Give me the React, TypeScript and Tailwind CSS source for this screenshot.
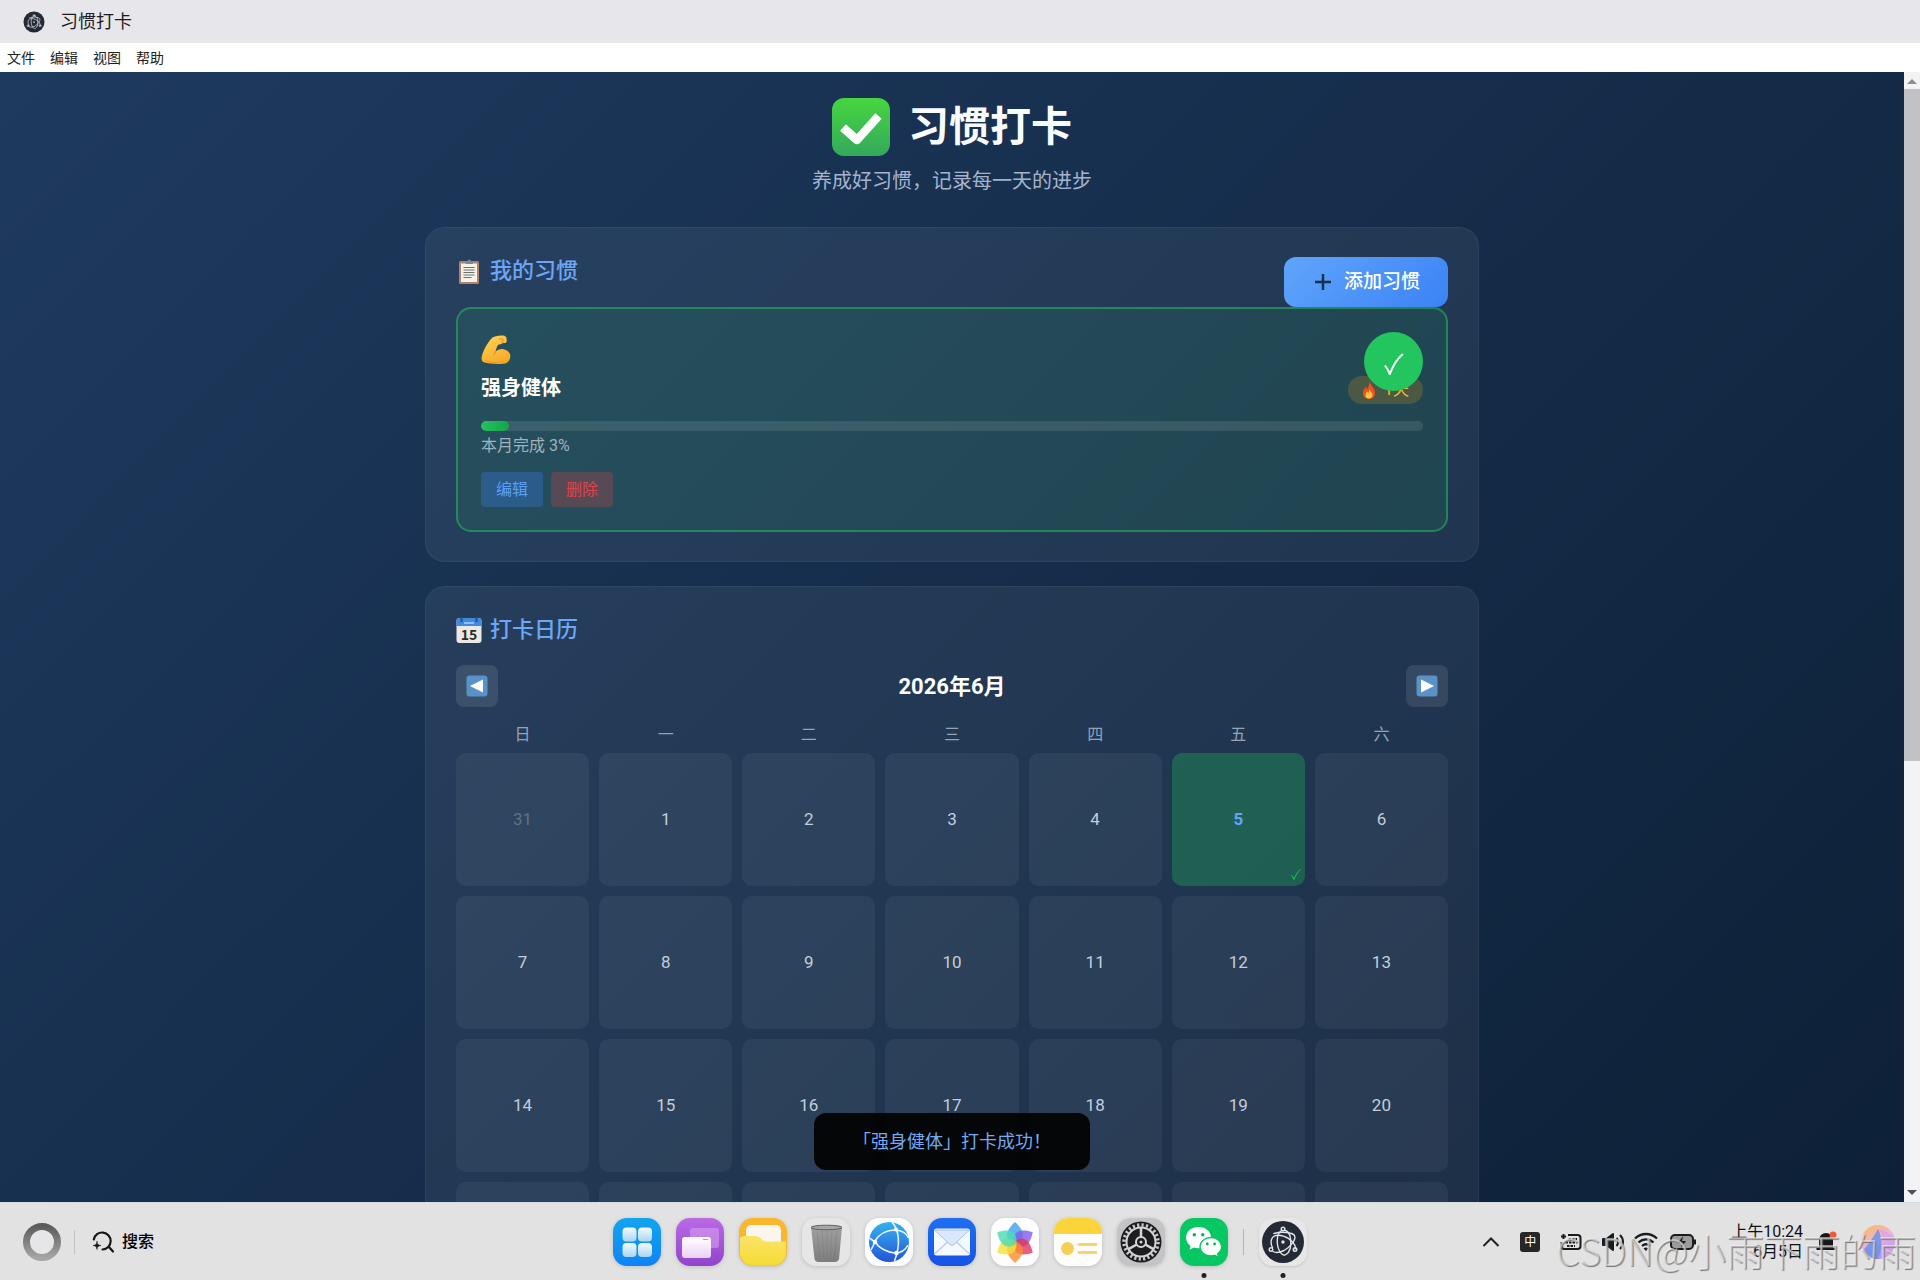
import { useState } from 'react'

const WEEKDAYS = ['日', '一', '二', '三', '四', '五', '六']
const DAYS = [31, ...Array.from({ length: 30 }, (_, i) => i + 1), 1, 2, 3, 4]

function ElectronLogo({ className }: { className?: string }) {
  return (
    <svg viewBox="0 0 48 48" className={className} aria-hidden="true">
      <circle cx="24" cy="24" r="21" fill="#242936" />
      <g fill="none" stroke="#dfe6ea" strokeWidth="1.4" strokeLinecap="round">
        <path d="M13.5 29.5C11 25 12 20.5 14.5 18.500C20 15.500 29 18.500 34 24.500C36 27 37 29.500 36 31" />
        <path d="M22.500 12.500C17 16 17 28 21.500 34.500C23 37 25.500 37.500 27 36.500C31 34 32.500 28 31.500 20.500C31 16.500 29 13 25.500 12" />
        <path d="M15 15.500C22 13.500 33 14 35.500 17.500C37.500 21.500 31.500 29 25 32.500C21 34.500 16.500 35 14 33.500" />
        <circle cx="24" cy="11" r="1.8" />
        <circle cx="12" cy="31.500" r="1.8" />
        <circle cx="36" cy="31.500" r="1.8" />
      </g>
      <circle cx="24" cy="24" r="1.7" fill="#dfe6ea" />
    </svg>
  )
}

function CheckBadge() {
  return (
    <svg viewBox="0 0 58 58" className="size-[58px]" aria-hidden="true">
      <defs>
        <linearGradient id="badge" x1="0" y1="0" x2="0" y2="1">
          <stop offset="0" stopColor="#47d63f" />
          <stop offset="1" stopColor="#33a85c" />
        </linearGradient>
      </defs>
      <rect width="58" height="58" rx="12" fill="url(#badge)" />
      <path d="M11 29.500L25 42L46.500 18" fill="none" stroke="#fff" strokeWidth="8.500" strokeLinejoin="round" />
    </svg>
  )
}

function Clipboard() {
  return (
    <svg viewBox="0 0 26 26" className="size-[26px]" aria-hidden="true">
      <rect x="3" y="3" width="20" height="23" rx="1.500" fill="#b3826a" />
      <rect x="5" y="5.500" width="16" height="18.500" fill="#f5f2ea" />
      <path d="M10 5.500V3.500H11.500A1.800 1.800 0 0 1 15 3.500H16.500V5.500Z" fill="#7d8798" stroke="#7d8798" />
      <path d="M7.500 9.500h11M7.500 12h11M7.500 14.500h11M7.500 17h11M7.500 19.500h8" stroke="#6c716f" strokeWidth="1" />
    </svg>
  )
}

function CalendarEmoji() {
  return (
    <svg viewBox="0 0 26 26" className="size-[26px]" aria-hidden="true">
      <rect x="0.500" y="1" width="25" height="25" rx="3" fill="#ece9e4" />
      <path d="M0.500 9V4a3 3 0 0 1 3-3h19a3 3 0 0 1 3 3v5Z" fill="#3f8ae0" />
      <path d="M5.500 0v5M20.500 0v5" stroke="#1d4f94" strokeWidth="2" />
      <path d="M8 6h10" stroke="#8fc0f5" strokeWidth="2" />
      <text x="13" y="22.500" textAnchor="middle" fontSize="14" fontWeight="600" fontFamily="'Noto Sans CJK SC', sans-serif" fill="#2b2b2b">15</text>
    </svg>
  )
}

function Bicep() {
  return (
    <svg viewBox="0 0 30 30" className="size-[30px]" aria-hidden="true">
      <defs>
        <linearGradient id="arm" x1="0" y1="0" x2="0.4" y2="1">
          <stop offset="0" stopColor="#ffd257" />
          <stop offset="1" stopColor="#f9ac2b" />
        </linearGradient>
      </defs>
      <path
        d="M14 1.500C17 0.500 21 0.200 23.500 0.700C25.500 1.500 26 4 25.500 7C25 8.300 23 8.200 22 7.700C20.500 9.500 18.500 9.500 17 9.700C16 12 15 14 14.500 16.800C17 14.300 20 13.700 22.500 14.300C26.500 15 29 17.500 29.300 20.500C29.500 24 28 27 25 28.200C20 29.700 8 29 3 27.300C0.800 26.500 0.200 24.500 0.700 22C2 15.500 6 9 9.500 4.500C10.800 2.800 12 2 14 1.500Z"
        fill="url(#arm)"
      />
      <path d="M13 20C14 18 14.500 17.200 14.500 16.800M18.500 4C20 3.500 22 3.800 22.500 5.200M22 7.700C21 7.300 20.500 6.500 21 5.800" fill="none" stroke="#d98a1c" strokeWidth="1" strokeLinecap="round" />
      <path d="M4 25.500C11 28 21 28 27 25" fill="none" stroke="#e08f1f" strokeWidth="1" opacity="0.6" />
    </svg>
  )
}

function Flame() {
  return (
    <svg viewBox="0 0 14 18" className="h-[18px] w-[14px]" aria-hidden="true">
      <path d="M7.500 0C8 4 13 7 13 12C13 15.500 10.500 18 7 18C3.500 18 1 15.500 1 12C1 9 3 8 3.500 5.500C4.500 6.500 5 7.500 5 8.500C6.500 6 7.500 3.500 7.500 0Z" fill="#f4501e" />
      <path d="M7.300 8C7.800 10.500 10.500 11.500 10.500 14C10.500 16.500 9 17.500 7 17.500C5 17.500 3.500 16.300 3.500 14.200C3.500 12.500 4.500 11.500 5 10.500C6 11 6.200 11.500 6.200 12C7 11 7.400 9.500 7.300 8Z" fill="#ffc83d" />
    </svg>
  )
}

function Tick({ className }: { className?: string }) {
  return (
    <svg viewBox="0 0 20 22" className={className} aria-hidden="true">
      <path d="M1 12.500C3 15 4.500 18 5.800 21C9 12.500 13 6 18.800 1" fill="none" stroke="currentColor" strokeWidth="2" />
    </svg>
  )
}

function Arrow({ d }: { d: string }) {
  return (
    <svg viewBox="0 0 22 22" className="size-[22px]" aria-hidden="true">
      <rect x="0.500" y="0.500" width="21" height="21" rx="3" fill="#5a91c6" />
      <path d={d} fill="#fff" />
    </svg>
  )
}

const dockIcons = [
  {
    name: '启动器',
    art: (
      <>
        <rect width="48" height="48" rx="14" fill="url(#dk-blue)" />
        {[[9.5, 9.5], [25, 9.5], [9.5, 25], [25, 25]].map(([x, y]) => (
          <rect key={`${x}-${y}`} x={x} y={y} width="14" height="14" rx="4" fill="url(#dk-glass)" />
        ))}
      </>
    ),
  },
  {
    name: '多任务',
    art: (
      <>
        <rect width="48" height="48" rx="14" fill="url(#dk-purple)" />
        <rect x="14" y="10" width="29" height="20" rx="3" fill="#d9a4f0" opacity="0.55" />
        <rect x="6" y="19" width="29" height="21" rx="3" fill="url(#dk-lilac)" />
        <path d="M27 21.500h5" stroke="#c78be0" />
      </>
    ),
  },
  {
    name: '文件管理',
    art: (
      <>
        <rect width="48" height="48" rx="14" fill="#fbb72c" />
        <rect x="7" y="7" width="35" height="24" rx="5" fill="#faf6ee" />
        <path d="M1 21C1 18 4 18 7 18H17C21 18 22 22 26 23.500C29 24.500 33 23 37 23.500H47V34A13 13 0 0 1 34 47.500H14A13 13 0 0 1 1 34Z" fill="url(#dk-yellow)" />
      </>
    ),
  },
  {
    name: '回收站',
    art: (
      <>
        <rect width="48" height="48" rx="14" fill="#e6e6e6" />
        <path d="M9 9H40L37 41C36.500 43.500 34 44 31 44H18C15 44 13 43.500 12.500 41Z" fill="url(#dk-bin)" />
        <path d="M15 13L18 42M20 13L22 43M25 13V43M30 13L28 43M35 13L32 42" stroke="#6f6f6f" strokeWidth="0.8" opacity="0.4" />
        <ellipse cx="24.500" cy="9.500" rx="15.500" ry="2.300" fill="#a5a5a5" stroke="#5f5f5f" strokeWidth="1" />
      </>
    ),
  },
  {
    name: '浏览器',
    art: (
      <>
        <rect width="48" height="48" rx="14" fill="#fdfdff" />
        <circle cx="24" cy="24" r="20" fill="url(#dk-globe)" />
        <g fill="none" stroke="#e8f5ff" strokeWidth="1.6">
          <path d="M9 24C14 16 21 12 30 12C37 12.500 42 16 43.500 20" />
          <path d="M10 24C14 30 22 34.500 30 35C37 35 41 31 43 27" />
          <path d="M27 4C34 12 36 26 29.500 43" />
          <path d="M4.500 20L10 24L6 32" />
        </g>
        <circle cx="10" cy="24" r="2.300" fill="#fff" />
        <circle cx="31" cy="11.500" r="2" fill="#fff" />
        <circle cx="31.500" cy="35" r="2.300" fill="#fff" />
      </>
    ),
  },
  {
    name: '邮件',
    art: (
      <>
        <rect width="48" height="48" rx="14" fill="url(#dk-mail)" />
        <rect x="6" y="10.500" width="36" height="27" rx="2.500" fill="#f4f8ff" />
        <path d="M6.500 36L20 23.500M41.500 36L28 23.500" stroke="#b9cdf6" strokeWidth="1.500" />
        <path d="M6.500 12L22 26.500C23.500 27.800 24.500 27.800 26 26.500L41.500 12Z" fill="#dbe7fd" stroke="#a9c1f0" />
      </>
    ),
  },
  {
    name: '图库',
    art: (
      <>
        <rect width="48" height="48" rx="14" fill="#fdfdfd" />
        {['#3ea0ee', '#7f5be8', '#e0345c', '#fb8b2f', '#f4e13a', '#48dcb8'].map((c, i) => (
          <path key={c} d="M24 26C12 21 15 12 24 4C33 12 36 21 24 26Z" fill={c} opacity="0.8" transform={`rotate(${i * 60} 24 24.500)`} />
        ))}
      </>
    ),
  },
  {
    name: '备忘录',
    art: (
      <>
        <rect width="48" height="48" rx="14" fill="#fdfdfb" />
        <path d="M0 16V14A14 14 0 0 1 14 0H34A14 14 0 0 1 48 14V16Z" fill="#fbd43c" />
        <circle cx="13.500" cy="30.500" r="6.500" fill="#f7cf55" />
        <path d="M25 26.500H42M25 34.500H42" stroke="#f9d36c" strokeWidth="3" strokeLinecap="round" />
      </>
    ),
  },
  {
    name: '设置',
    art: (
      <>
        <rect width="48" height="48" rx="14" fill="#c4c4c6" />
        <circle cx="24" cy="24" r="20.500" fill="#1d1d1f" />
        <circle cx="24" cy="24" r="17" fill="none" stroke="#c9c9cb" strokeWidth="3.500" strokeDasharray="2.2 2.25" />
        <circle cx="24" cy="24" r="14.500" fill="none" stroke="#d5d5d7" strokeWidth="2" />
        <circle cx="24" cy="24" r="5" fill="none" stroke="#d5d5d7" strokeWidth="2" />
        <path d="M24 19V9.500M19.700 26.500L11.500 31.200M28.300 26.500L36.500 31.200" stroke="#d5d5d7" strokeWidth="2.500" />
        <circle cx="24" cy="24" r="1.500" fill="#d5d5d7" />
      </>
    ),
  },
  {
    name: '微信',
    running: true,
    art: (
      <>
        <rect width="48" height="48" rx="14" fill="#07c763" />
        <path d="M18.500 9C11.500 9 6 13.600 6 19.600C6 23 7.800 26 10.600 28L9.500 31.800L13.800 29.500C15.300 30 16.900 30.200 18.500 30.200C25.500 30.200 31 25.500 31 19.600C31 13.600 25.500 9 18.500 9Z" fill="#fff" />
        <path d="M31 19.500C25 19.500 20 23.500 20 28.600C20 33.800 25 37.800 31 37.800C32.300 37.800 33.600 37.600 34.800 37.200L38.500 39.200L37.600 35.900C40 34.200 41.600 31.600 41.600 28.600C41.600 23.500 37 19.500 31 19.500Z" fill="#fff" stroke="#07c763" strokeWidth="1.300" />
        <g fill="#07b058">
          <circle cx="14.300" cy="16.800" r="1.700" />
          <circle cx="22.800" cy="16.800" r="1.700" />
          <circle cx="27.300" cy="26" r="1.400" />
          <circle cx="34.600" cy="26" r="1.400" />
        </g>
      </>
    ),
  },
]

function DockDefs() {
  const stops: [string, string, string][] = [
    ['dk-blue', '#12a5ee', '#0f83f6'],
    ['dk-glass', '#f4fafd', '#a9d6f2'],
    ['dk-purple', '#bb6ae6', '#9144cb'],
    ['dk-lilac', '#ffffff', '#ecd0f7'],
    ['dk-yellow', '#fbe36a', '#f4dc33'],
    ['dk-bin', '#a0a0a0', '#7d7d7d'],
    ['dk-globe', '#35b2ee', '#2355d8'],
    ['dk-mail', '#1f6ff0', '#1552e6'],
    ['dk-ring', '#5d5d5d', '#a5a5a5'],
  ]
  return (
    <svg width="0" height="0" className="absolute" aria-hidden="true">
      <defs>
        {stops.map(([id, a, b]) => (
          <linearGradient key={id} id={id} x1="0" y1="0" x2="0" y2="1">
            <stop offset="0" stopColor={a} />
            <stop offset="1" stopColor={b} />
          </linearGradient>
        ))}
        <linearGradient id="dk-ai" x1="0.2" y1="0" x2="0.7" y2="1">
          <stop offset="0" stopColor="#fdb24a" />
          <stop offset="0.45" stopColor="#f3a9c8" />
          <stop offset="1" stopColor="#9a7ef5" />
        </linearGradient>
      </defs>
    </svg>
  )
}

function Taskbar() {
  return (
    <footer className="relative grid h-[78px] shrink-0 grid-cols-[1fr_auto_1fr] items-center border-t border-[#d3dbe6] bg-[#e2e2e2] text-black">
      <DockDefs />
      <div className="flex items-center pl-[23px]">
        <button aria-label="主页">
          <svg viewBox="0 0 38 38" className="size-[38px]" aria-hidden="true">
            <circle cx="19" cy="19" r="15.500" fill="#e6e6e8" stroke="url(#dk-ring)" strokeWidth="7" />
          </svg>
        </button>
        <span className="ml-[13px] h-6 w-px bg-[#c2c2c2]" />
        <button className="ml-4 flex items-center gap-[7px] text-base font-medium">
          <svg viewBox="0 0 24 24" className="size-6" fill="none" stroke="#151515" strokeWidth="2.200" strokeLinecap="round" aria-hidden="true">
            <path d="M2.800 9.500A8.500 8.500 0 1 1 11.500 19.500M17.500 16.500L22 21.500" />
            <path d="M6 11.500C6.500 14.500 7 15 10 15.500C7 16 6.500 16.500 6 19.500C5.500 16.500 5 16 2 15.500C5 15 5.500 14.500 6 11.500Z" fill="#151515" strokeWidth="0.5" />
          </svg>
          搜索
        </button>
      </div>

      <div className="flex items-center gap-[15px]">
        {dockIcons.map(icon => (
          <button key={icon.name} aria-label={icon.name} className="relative">
            <svg viewBox="0 0 48 48" className="size-12 drop-shadow-sm" aria-hidden="true">{icon.art}</svg>
            {icon.running && <span className="absolute -bottom-3 left-1/2 size-[5px] -translate-x-1/2 rounded-full bg-[#222]" />}
          </button>
        ))}
        <span className="h-[26px] w-px bg-[#b5b5b5]" />
        <button aria-label="习惯打卡" className="relative rounded-[14px] bg-[#e7e7e8] shadow-sm">
          <ElectronLogo className="size-12" />
          <span className="absolute -bottom-3 left-1/2 size-[5px] -translate-x-1/2 rounded-full bg-[#222]" />
        </button>
      </div>

      <div className="flex items-center justify-end pr-6">
        <button aria-label="展开托盘">
          <svg viewBox="0 0 18 18" className="size-[18px]" fill="none" stroke="#222" strokeWidth="2" aria-hidden="true">
            <path d="M1.500 13L9 5.500L16.500 13" />
          </svg>
        </button>
        <span className="ml-5 flex size-5 items-center justify-center rounded-[3px] bg-[#262626] text-xs text-white">中</span>
        <svg viewBox="0 0 22 20" className="ml-5 h-5 w-[22px]" fill="none" stroke="#1b1b1b" strokeWidth="2" aria-hidden="true">
          <path d="M8 3H17.500A3 3 0 0 1 20.500 6V14A3 3 0 0 1 17.500 17H4.500A3 3 0 0 1 1.500 14V10M1 4.500L6 4.500M3.500 2V7" />
          <path d="M8.500 7H17M5.500 10.500H17M7 14H15" strokeDasharray="2.500 1" />
        </svg>
        <svg viewBox="0 0 24 20" className="ml-5 h-5 w-6" fill="none" stroke="#1b1b1b" strokeWidth="2" aria-hidden="true">
          <path d="M1 7H4.500L11 2V18L4.500 13H1Z" fill="#1b1b1b" strokeLinejoin="round" />
          <path d="M14.500 6C16.500 8 16.500 12 14.500 14M18 3C22 7 22 13 18 17" />
        </svg>
        <svg viewBox="0 0 24 20" className="ml-2 h-5 w-6" fill="none" stroke="#1b1b1b" strokeWidth="2.300" aria-hidden="true">
          <path d="M1 6.500C7.500 0.500 16.500 0.500 23 6.500M4.500 10.500C9 6.300 15 6.300 19.500 10.500M8 14C10.500 11.800 13.500 11.800 16 14" />
          <path d="M12 19L9.500 16.500C11 15.200 13 15.200 14.500 16.500Z" fill="#1b1b1b" stroke="none" />
        </svg>
        <svg viewBox="0 0 27 18" className="ml-3 h-[18px] w-[27px]" aria-hidden="true">
          <rect x="1" y="2" width="22" height="14" rx="4" fill="#9b9b9b" stroke="#1b1b1b" strokeWidth="2" />
          <path d="M25 6.500V11.500" stroke="#1b1b1b" strokeWidth="2" />
          <path d="M13 3L8 10H12L11 15L16 8H12Z" fill="#1b1b1b" />
        </svg>
        <div className="ml-[34px] text-right text-base leading-5 text-[#111]">
          <p>上午10:24</p>
          <p>6月5日</p>
        </div>
        <svg viewBox="0 0 22 22" className="ml-3 size-[22px]" aria-hidden="true">
          <path d="M4 17V9A7 7 0 0 1 18 9V17H20.500V19H1.500V17Z" fill="#161616" />
          <circle cx="18" cy="4" r="3.500" fill="#ee5a36" />
        </svg>
        <button aria-label="智能助手" className="ml-[23px]">
          <svg viewBox="0 0 36 36" className="size-9" aria-hidden="true">
            <circle cx="18" cy="18" r="17" fill="url(#dk-ai)" opacity="0.8" />
            <path d="M18 5C13 13 10 19 4 25C8 34 15 35 18 35C22 27 23 14 18 5Z" fill="#5b8ef3" opacity="0.75" />
            <path d="M18 5C24 12 29 20 20 35C31 34 35 25 34 15C31 9 24 6 18 5Z" fill="#d9a2ee" opacity="0.8" />
          </svg>
        </button>
      </div>

      <span className="pointer-events-none absolute bottom-[11px] right-1 whitespace-nowrap font-['Noto_Sans_CJK_SC',sans-serif] text-[38px] font-light leading-none text-white/50 [text-shadow:1px_1px_1px_#777]">
        CSDN@小雨下雨的雨
      </span>
    </footer>
  )
}

export default function App() {
  const [checked, setChecked] = useState(true)
  const [selected, setSelected] = useState(5)

  return (
    <div className="flex h-screen flex-col overflow-hidden font-[Roboto,'Noto_Sans_CJK_SC',sans-serif]">
      <header className="flex h-[43px] shrink-0 items-center gap-[14px] bg-[#e7e6ea] pl-[22px] text-lg text-[#1c1c22]">
        <ElectronLogo className="size-6" />
        <span>习惯打卡</span>
      </header>
      <nav className="flex h-[29px] shrink-0 items-center gap-[15px] bg-white pl-[7px] text-sm text-[#222]">
        {['文件', '编辑', '视图', '帮助'].map(m => <button key={m}>{m}</button>)}
      </nav>

      <div className="relative flex min-h-0 flex-1">
        <main className="min-w-0 flex-1 overflow-hidden">
          <div className="min-h-[1850px] bg-[linear-gradient(135deg,#1e3a5f_0%,#091a2d_100%)]">
            <div className="mx-auto max-w-[1054px] pt-[25px]">
              <div className="text-center">
                <h1 className="flex items-center justify-center gap-[18px] text-[41px] font-bold leading-[60px] text-[#f8fcff]">
                  <CheckBadge />
                  习惯打卡
                </h1>
                <p className="mt-2 text-xl leading-8 text-[#a5b4cc]">养成好习惯，记录每一天的进步</p>
              </div>

              {/* Habits */}
              <section className="mt-[30px] rounded-[20px] border border-white/5 bg-white/6 px-[30px] py-[29px]">
                <div className="flex items-start justify-between">
                  <h2 className="flex items-center gap-2 text-[22px] font-medium leading-7 text-[#6ba6f8]">
                    <Clipboard />
                    我的习惯
                  </h2>
                  <button className="flex h-[50px] items-center gap-3 rounded-xl bg-linear-135 from-[#60a5fa] to-[#3b82f6] pl-[30px] pr-7 text-[19px] font-medium text-white">
                    <svg viewBox="0 0 18 18" className="size-[18px]" stroke="#16304f" strokeWidth="2.500" aria-hidden="true">
                      <path d="M9 1V17M1 9H17" />
                    </svg>
                    添加习惯
                  </button>
                </div>

                <article className="relative rounded-[15px] border-2 border-[#22c55e]/50 bg-[#22c55e]/11 p-[23px]">
                  <div className="flex h-9 items-center"><Bicep /></div>
                  <div className="flex items-center justify-between">
                    <h3 className="text-xl font-bold leading-10 text-white">强身健体</h3>
                    <span className="mt-1 flex h-7 items-center gap-2 rounded-full bg-[#f59e0b]/20 px-[14px] text-base text-[#fbbf24]">
                      <Flame />
                      1天
                    </span>
                  </div>
                  <button
                    onClick={() => setChecked(c => !c)}
                    aria-label="打卡"
                    className="absolute right-[23px] top-[23px] flex size-[59px] items-center justify-center rounded-full bg-[#22c55e] text-white"
                  >
                    {checked && <Tick className="mt-1 h-[22px] w-5" />}
                  </button>
                  <div className="mt-[13px] h-[10px] overflow-hidden rounded-full bg-white/10">
                    <div className="h-full rounded-full bg-linear-to-r from-[#22c55e] to-[#16a34a]" style={{ width: '3%' }} />
                  </div>
                  <p className="mt-[3px] text-base leading-6 text-[#9fb2bd]">本月完成 3%</p>
                  <div className="mt-[14px] flex gap-2">
                    <button className="h-[35px] rounded-sm bg-[#3b82f6]/30 px-[15px] text-base text-[#5b9ff5]">编辑</button>
                    <button className="h-[35px] rounded-sm bg-[#ef4444]/25 px-[15px] text-base text-[#e0424a]">删除</button>
                  </div>
                </article>
              </section>

              {/* Calendar */}
              <section className="mt-6 rounded-[20px] border border-white/5 bg-white/6 px-[30px] py-[29px]">
                <h2 className="flex items-center gap-2 text-[22px] font-medium leading-7 text-[#6ba6f8]">
                  <CalendarEmoji />
                  打卡日历
                </h2>
                <div className="mt-[21px] flex items-center justify-between">
                  <button aria-label="上个月" className="flex size-[42px] items-center justify-center rounded-lg bg-white/10">
                    <Arrow d="M17 4.500V17.500L4 11Z" />
                  </button>
                  <span className="text-[22px] font-bold text-white">2026年6月</span>
                  <button aria-label="下个月" className="flex size-[42px] items-center justify-center rounded-lg bg-white/10">
                    <Arrow d="M5 4.500V17.500L18 11Z" />
                  </button>
                </div>
                <div className="mt-[10px] grid grid-cols-7 gap-x-[10px] text-center text-base leading-9 text-[#94a3b8]">
                  {WEEKDAYS.map(d => <span key={d}>{d}</span>)}
                </div>
                <div className="grid grid-cols-7 gap-[10px] text-[17px]">
                  {DAYS.map((d, i) => {
                    const outside = i === 0 || i > 30
                    const done = !outside && d === 5
                    return (
                      <button
                        key={i}
                        onClick={() => setSelected(d)}
                        aria-pressed={!outside && selected === d}
                        className={`relative flex aspect-square items-center justify-center rounded-[10px] ${
                          done ? 'bg-[#22c55e]/30 font-bold text-[#60a5fa]' : outside ? 'bg-white/5 text-[#60718a]' : 'bg-white/5 text-[#c3cedb]'
                        }`}
                      >
                        {d}
                        {done && <Tick className="absolute bottom-[6px] right-1 h-[11px] w-[10px] text-[#22c55e]" />}
                      </button>
                    )
                  })}
                </div>
              </section>
            </div>
          </div>
        </main>

        {/* Scrollbar */}
        <div className="flex w-4 shrink-0 flex-col items-center justify-between bg-[#f3f3f5] py-[7px]">
          <svg viewBox="0 0 10 5" className="h-[5px] w-[10px]" aria-hidden="true"><path d="M0 5L5 0L10 5Z" fill="#8b8b8b" /></svg>
          <div className="mt-[5px] flex w-full flex-1 flex-col">
            <div className="h-[61%] bg-[#c2c1c6]" />
          </div>
          <svg viewBox="0 0 10 5" className="h-[5px] w-[10px]" aria-hidden="true"><path d="M0 0L5 5L10 0Z" fill="#505050" /></svg>
        </div>

        <div role="status" className="absolute bottom-8 left-1/2 -ml-2 -translate-x-1/2 rounded-xl bg-black/90 px-[39px] text-lg leading-[57px] whitespace-nowrap text-[#74aaf5]">
          「强身健体」打卡成功！
        </div>
      </div>

      <Taskbar />
    </div>
  )
}
